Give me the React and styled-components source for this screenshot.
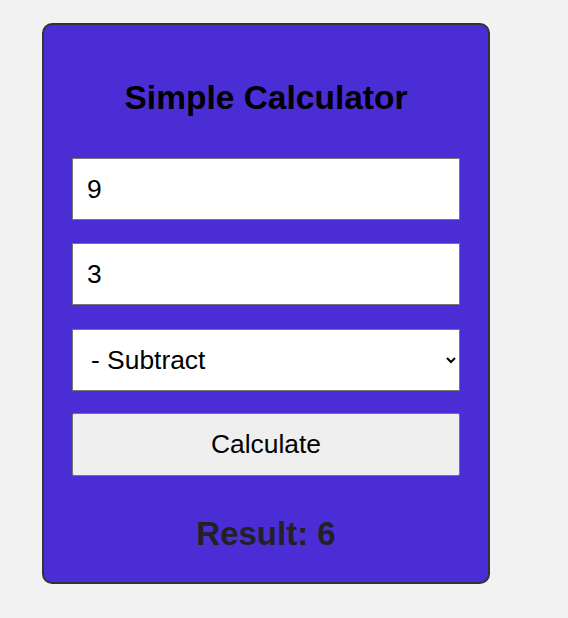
import { useState } from "react"
import styled, { createGlobalStyle } from "styled-components"

const GlobalStyle = createGlobalStyle`
    body {
        margin: 0;
        background-color: #f2f2f2;
        font-family: "Liberation Sans", Arial, sans-serif;
    }
`

function App() {
    const [first, setFirst] = useState("9")
    const [second, setSecond] = useState("3")
    const [operation, setOperation] = useState("subtract")
    const [result, setResult] = useState(6)

    function calculate() {
        const a = Number(first)
        const b = Number(second)
        if (operation === "add") setResult(a + b)
        if (operation === "subtract") setResult(a - b)
        if (operation === "multiply") setResult(a * b)
        if (operation === "divide") setResult(b === 0 ? "Error" : a / b)
    }

    return (
        <Screen>
            <GlobalStyle />
            <Card>
                <Title>Simple Calculator</Title>
                <Field type="number" value={first} onChange={e => setFirst(e.target.value)} />
                <Field type="number" value={second} onChange={e => setSecond(e.target.value)} />
                <Select value={operation} onChange={e => setOperation(e.target.value)}>
                    <option value="add">+ Add</option>
                    <option value="subtract">- Subtract</option>
                    <option value="multiply">× Multiply</option>
                    <option value="divide">÷ Divide</option>
                </Select>
                <CalcButton onClick={calculate}>Calculate</CalcButton>
                <Result>Result: {result}</Result>
            </Card>
        </Screen>
    )
}

export default App

const Screen = styled.div`
    padding: 23px 0 36px 42px;
    min-height: 100vh;
    box-sizing: border-box;
`

const Card = styled.div`
    width: 448px;
    box-sizing: border-box;
    display: flex;
    flex-direction: column;
    gap: 23px;
    padding: 28px 28px 29px 28px;
    background-color: #4a2dd5;
    border: 2px solid #333333;
    border-radius: 10px;
`

const Title = styled.h1`
    margin: 26px 0 18px;
    text-align: center;
    font-size: 33.5px;
    font-weight: bold;
    color: #000000;
`

const Field = styled.input`
    height: 62px;
    box-sizing: border-box;
    padding: 0 14px;
    border: 1px solid #767676;
    border-radius: 0;
    background-color: #ffffff;
    font-family: "Liberation Sans", Arial, sans-serif;
    font-size: 26.4px;
    color: #000000;
    outline: none;

    &::-webkit-inner-spin-button,
    &::-webkit-outer-spin-button {
        -webkit-appearance: none;
        margin: 0;
    }
`

const Select = styled.select`
    height: 62px;
    box-sizing: border-box;
    margin-top: 1px;
    padding: 0 6px 0 14px;
    border: 1px solid #767676;
    border-radius: 0;
    background-color: #ffffff;
    font-family: "Liberation Sans", Arial, sans-serif;
    font-size: 26.4px;
    color: #000000;
`

const CalcButton = styled.button`
    height: 63px;
    box-sizing: border-box;
    margin-top: -1px;
    border: 1px solid #767676;
    border-radius: 2px;
    background-color: #efefef;
    font-family: "Liberation Sans", Arial, sans-serif;
    font-size: 26.4px;
    color: #000000;
    cursor: pointer;
`

const Result = styled.h2`
    margin: 16px 0 0;
    text-align: center;
    font-size: 33px;
    font-weight: bold;
    color: #222222;
`
